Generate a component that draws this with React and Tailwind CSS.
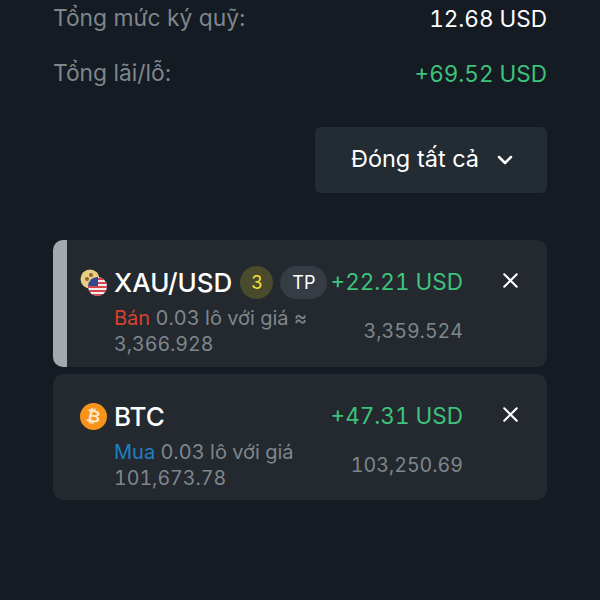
import { X, ChevronDown } from 'lucide-react';

function GoldUsdIcon() {
  return (
    <svg width="28" height="28" viewBox="0 0 28 28" className="shrink-0">
      <circle cx="10" cy="10" r="9.5" fill="#e8cd84" />
      <circle cx="7" cy="10" r="2" fill="#8a6a2a" />
      <circle cx="11" cy="6" r="2" fill="#8a6a2a" />
      <circle cx="13" cy="11" r="1.5" fill="#a5843c" />
      <clipPath id="flag">
        <circle cx="17.5" cy="17.5" r="9.5" />
      </clipPath>
      <g clipPath="url(#flag)">
        <rect x="8" y="8" width="19" height="19" fill="#f3eeee" />
        <rect x="8" y="9" width="19" height="2" fill="#d5444f" />
        <rect x="8" y="13" width="19" height="2" fill="#d5444f" />
        <rect x="8" y="17" width="19" height="2" fill="#d5444f" />
        <rect x="8" y="21" width="19" height="2" fill="#d5444f" />
        <rect x="8" y="25" width="19" height="2" fill="#d5444f" />
        <rect x="8" y="8" width="10" height="9" fill="#2f4a8f" />
      </g>
    </svg>
  );
}

function BtcIcon() {
  return (
    <svg width="27" height="27" viewBox="0 0 27 27" className="shrink-0">
      <circle cx="13.5" cy="13.5" r="13.5" fill="#f7931a" />
      <text x="13.5" y="19" textAnchor="middle" fontSize="17" fontWeight="700" fill="#fde7c8" fontFamily="DejaVu Sans, sans-serif" transform="rotate(10 13.5 13.5)">₿</text>
    </svg>
  );
}

function PositionCard({ icon, symbol, badges, side, sideColor, line1, line2, pnl, price, bar, height }) {
  return (
    <div className={`flex overflow-hidden rounded-[10px] bg-[#23292f] ${height}`}>
      {bar && <div className="w-[14px] shrink-0 bg-[#a3a9ad]" />}
      <div className={`flex flex-1 ${bar ? 'pl-[13px]' : 'pl-[27px]'}`}>
        <div className="flex-1 pt-[26px]">
          <div className="flex h-[33px] items-center">
            <div className="flex w-[34px]">{icon}</div>
            <span className="text-[26px] font-medium text-white">{symbol}</span>
            {badges}
            <span className="ml-auto pb-[1px] text-[22.5px] tabular-nums text-[#3fc27c]">{pnl}</span>
          </div>
          <div className="ml-[34px] mt-[6px] flex items-center justify-between text-[19.6px] leading-[26px] tabular-nums text-[#7f868c]">
            <div className="w-[205px]">
              <span className="text-[20px]" style={{ color: sideColor }}>{side}</span> <span className="text-[20px]">{line1}</span>
              <br />
              {line2}
            </div>
            <span>{price}</span>
          </div>
        </div>
        <div className="flex w-[84px] shrink-0 justify-center pt-[28px] pl-[10px]">
          <X size={25} strokeWidth={2} className="text-white" />
        </div>
      </div>
    </div>
  );
}

export default function App() {
  return (
    <div className="h-[600px] w-[600px] overflow-hidden bg-[#141b22] px-[53px] font-['Inter',sans-serif]">
      <div className="flex h-[37px] items-center justify-between">
        <span className="text-[22.8px] text-[#7f868c]">Tổng mức ký quỹ:</span>
        <span className="text-[22.5px] tabular-nums text-white">12.68 USD</span>
      </div>
      <div className="mt-[18px] flex h-[37px] items-center justify-between">
        <span className="text-[22.8px] text-[#7f868c]">Tổng lãi/lỗ:</span>
        <span className="text-[22.5px] tabular-nums text-[#3fc27c]">+69.52 USD</span>
      </div>
      <div className="mt-[35px] flex justify-end">
        <button className="flex h-[66px] w-[232px] items-center justify-center gap-[14px] rounded-[6px] bg-[#232b33] pb-[3px] pl-[6px] text-[23.5px] text-white">
          Đóng tất cả
          <ChevronDown size={24} strokeWidth={2.5} className="mt-[3px]" />
        </button>
      </div>
      <div className="mt-[47px] flex flex-col gap-[7px]">
        <PositionCard
          bar
          height="h-[127px]"
          icon={<GoldUsdIcon />}
          symbol="XAU/USD"
          badges={
            <>
              <span className="ml-[8px] flex h-[33px] w-[33px] items-center justify-center rounded-full bg-[#4a4b2c] text-[18px] text-[#f5e33b]">3</span>
              <span className="ml-[7px] flex h-[33px] w-[47px] items-center justify-center rounded-full bg-[#353c43] text-[18px] text-white">TP</span>
            </>
          }
          side="Bán"
          sideColor="#d9412f"
          line1="0.03 lô với giá ≈"
          line2="3,366.928"
          pnl="+22.21 USD"
          price="3,359.524"
        />
        <PositionCard
          height="h-[126px]"
          icon={<BtcIcon />}
          symbol="BTC"
          side="Mua"
          sideColor="#1f7fc1"
          line1="0.03 lô với giá"
          line2="101,673.78"
          pnl="+47.31 USD"
          price="103,250.69"
        />
      </div>
    </div>
  );
}
